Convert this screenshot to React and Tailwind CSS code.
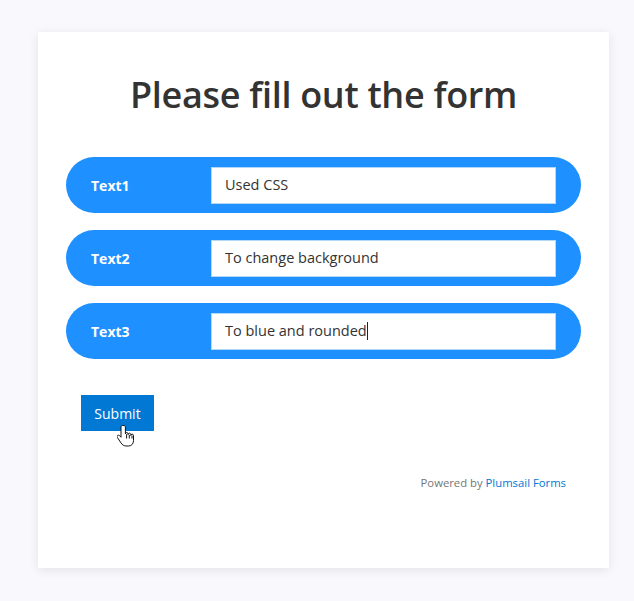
import React from 'react';

const fields = [
  { label: 'Text1', value: 'Used CSS' },
  { label: 'Text2', value: 'To change background' },
  { label: 'Text3', value: 'To blue and rounded', caret: true },
];

function HandCursor() {
  return (
    <svg width="20" height="24" viewBox="0 0 20 24" className="absolute left-[79px] top-[392px]">
      <path
        d="M5.5 1.5c-.9 0-1.5.7-1.5 1.5v10.2l-1.4-1.5c-.7-.7-1.7-.7-2.2 0-.5.5-.4 1.3 0 1.9l3.6 5.3c1.2 1.8 2.8 3.1 5.2 3.1h2.3c3 0 5-2.3 5-5.3v-5.2c0-.8-.6-1.4-1.4-1.4-.7 0-1.3.6-1.3 1.4v-.9c0-.8-.6-1.4-1.4-1.4-.7 0-1.3.6-1.3 1.4v-.7c0-.8-.6-1.4-1.4-1.4-.7 0-1.3.6-1.3 1.4V3c0-.8-.6-1.5-1.5-1.5z"
        fill="#fff"
        stroke="#111"
        strokeWidth="1"
        strokeLinejoin="round"
      />
      <path d="M9.6 10.2v4.3M12.3 10.9v3.6M15 11.6v2.9" stroke="#111" strokeWidth="1" />
    </svg>
  );
}

export default function App() {
  return (
    <div className="min-h-screen bg-[#f8f8fd] pt-8 pl-[38px] font-['Open_Sans','Noto_Sans',sans-serif]">
      <div className="relative w-[571px] h-[536px] bg-white shadow-[0_2px_10px_rgba(0,0,0,0.09)] px-7 pt-[38px]">
        <h1 className="text-center text-[36px] leading-[50px] font-semibold text-[#333] tracking-[-0.3px]">
          Please fill out the form
        </h1>

        <div className="mt-[37px] flex flex-col gap-[17px]">
          {fields.map((f) => (
            <div key={f.label} className="flex items-center h-14 w-[515px] rounded-full bg-[#1e90ff] pl-[25px] pr-[25px]">
              <span className="w-[120px] text-white font-bold text-[14px]">{f.label}</span>
              <div className="flex-1 h-[37px] bg-white border border-[#b3d7f7] flex items-center pl-[13px] text-[14.5px] text-[#333]">
                {f.value}
                {f.caret && <span className="inline-block w-px h-[18px] bg-[#222]" />}
              </div>
            </div>
          ))}
        </div>

        <button className="mt-9 ml-[15px] h-9 w-[73px] bg-[#0078d4] text-white text-[14px]">
          Submit
        </button>

        <div className="mt-[44px] pr-[15px] text-right text-[11.3px] text-[#767676]">
          Powered by <span className="text-[#0078d4]">Plumsail Forms</span>
        </div>

        <HandCursor />
      </div>
    </div>
  );
}
